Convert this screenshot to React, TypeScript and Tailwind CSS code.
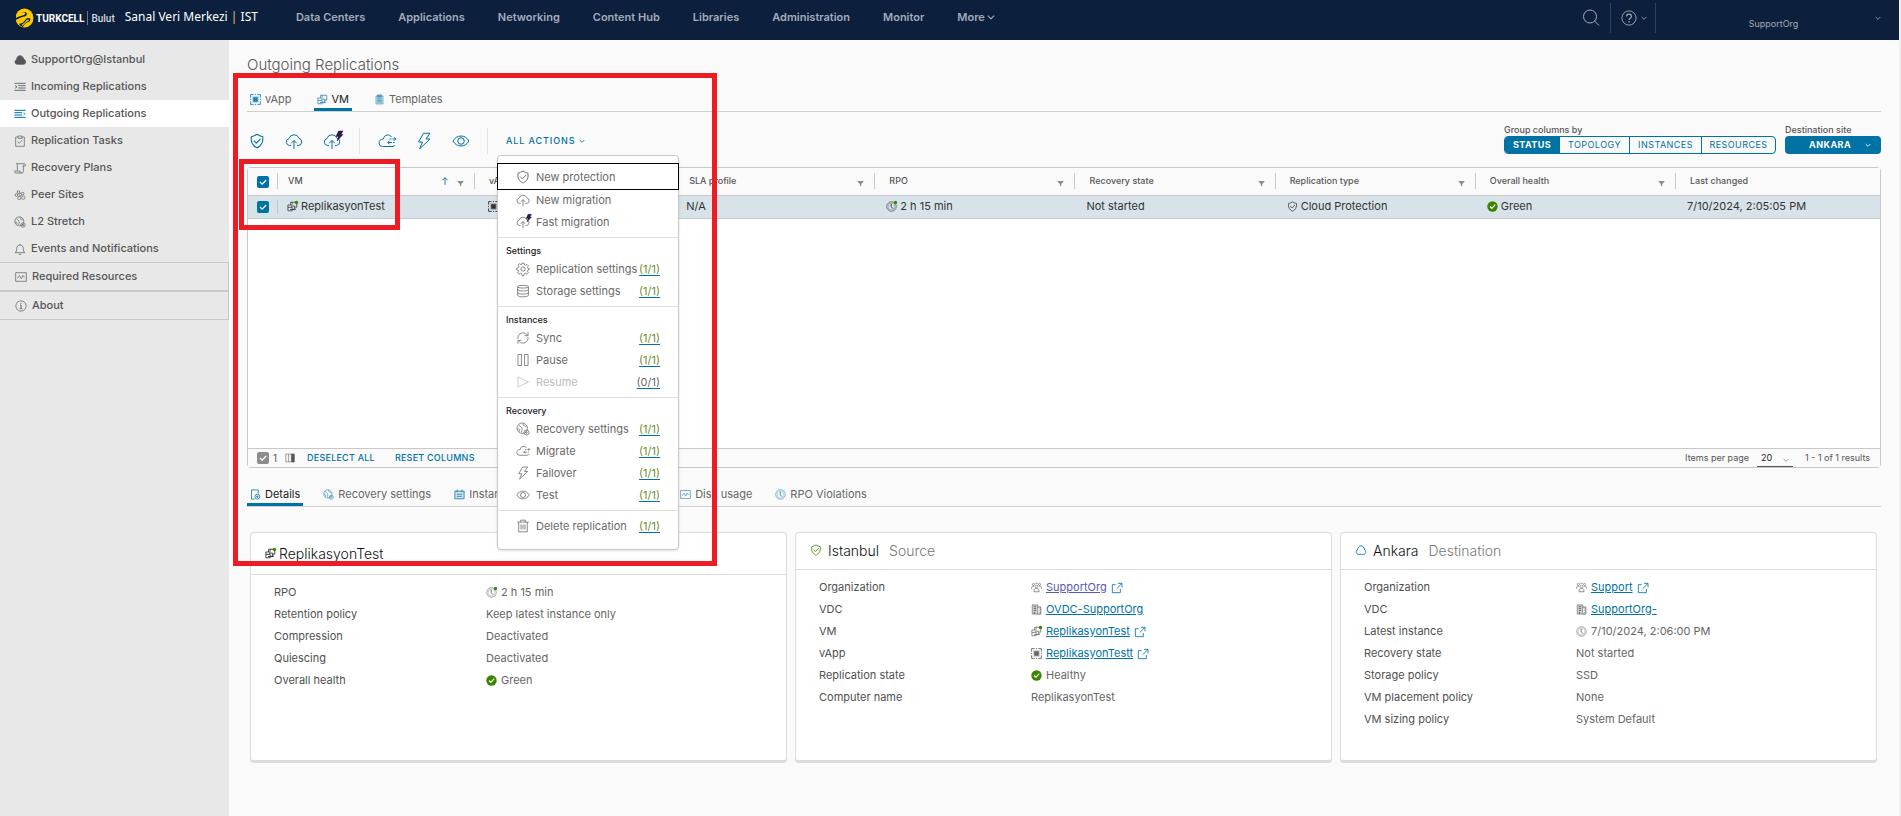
import React from "react";

type IconName =
  | "cloud" | "listIn" | "listOut" | "tasks" | "scroll" | "peers" | "globe" | "bell" | "chart" | "info"
  | "vapp" | "vm" | "clipboard" | "shield" | "cloudUp" | "cloudFast" | "migrate" | "bolt" | "eye"
  | "gear" | "storage" | "sync" | "pause" | "play" | "trash" | "details" | "calendar" | "clock"
  | "people" | "building" | "popout" | "ok" | "drop" | "search" | "help" | "chevron" | "filter" | "arrowUp" | "columns";

const CLOUD = "M12 27H9.5A7 7 0 0 1 8 13.2 10.5 10.5 0 0 1 28 12.5a7.4 7.4 0 0 1-1 14.5h-3";

const shapes: Record<IconName, React.ReactNode> = {
  cloud: <path fill="currentColor" d="M9 31a7 7 0 0 1-4-12c2-1 2-2 3-5C9 8 13 5 18 5s10 4 11 10c4 2 6 5 6 9a7 7 0 0 1-6 7Z" />,
  listIn: <path d="M1 7h34M13 14h22M13 21h22M1 28h34M3 13l6 4.5L3 22" strokeWidth="2.500" />,
  listOut: (
    <>
      <path d="M1 7h34M1 14h23M1 21h23M1 28h34" strokeWidth="3" />
      <path d="M29 13l4 4.500-4 4.500" />
    </>
  ),
  tasks: <path d="M12 6H5v28h26V6h-7M12 3h12v7H12ZM11 20l5 5 9-10" />,
  scroll: <path d="M10 25V5h21a3 3 0 0 1 3 3v4h-6M28 8v21a4 4 0 0 1-4 4H6a4 4 0 0 1-4-4v-2h16v2a3 3 0 0 0 5 3M6 5h4" />,
  peers: (
    <>
      <circle cx="13" cy="9" r="4" /><circle cx="7" cy="18" r="4" /><circle cx="19" cy="17" r="4" />
      <circle cx="16" cy="27" r="5" /><circle cx="28" cy="26" r="5" /><circle cx="26" cy="14" r="4" />
    </>
  ),
  globe: (
    <>
      <circle cx="16" cy="16" r="13.500" />
      <path d="M7 8c5 5 5 2 8 8s-3 8 0 11M18 4c-2 6 6 5 9 9M4 18c5-2 6 4 4 7" />
      <circle cx="27" cy="27" r="6.500" /><circle cx="27" cy="27" r="2" />
    </>
  ),
  bell: <path d="M3 29c4-2 5-6 5-12 0-7 4-11 10-11s10 4 10 11c0 6 1 10 5 12ZM15 32a3 3 0 0 0 6 0M18 3v3" />,
  chart: <path d="M2 5h32v26H2ZM7 22l6-8 6 9 5-10 5 6" />,
  info: <><circle cx="18" cy="18" r="15.500" /><path d="M15 15h3v11M14 26h8M18 8.500v3" strokeWidth="2.500" /></>,
  vapp: (
    <>
      <path d="M2 12V2h10M24 2h10v10M34 24v10H24M12 34H2V24M2 16v4M34 16v4M16 2h4M16 34h4" strokeWidth="3" />
      <rect x="8" y="8" width="20" height="20" fill="currentColor" opacity=".5" stroke="none" /><rect x="12" y="12" width="12" height="12" fill="currentColor" />
    </>
  ),
  vm: <path d="M12 13V4h20v16h-6M3 21v-8h16M3 21h14v11H3ZM13 17h12v10h-5M17 4v5M10 28h18v-3" strokeWidth="2.500" />,
  clipboard: (
    <>
      <path d="M6 6h24v27H6Z" fill="currentColor" fillOpacity=".35" strokeOpacity=".6" /><path d="M12 3h12v7H12Z" fill="currentColor" fillOpacity=".5" />
      <path d="M11 16h14M11 21h14M11 26h14" />
    </>
  ),
  shield: <path d="M18 2.700C14 5.300 9.500 7.200 5 8.400v7.500C5 28 18 33.400 18 33.400S31 28 31 15.900V8.400C26.500 7.200 22 5.300 18 2.700ZM10.800 17l5.600 5.800L26 13" strokeWidth="2.500" />,
  cloudUp: <path d={CLOUD + "M18 34V17M12.500 22.500 18 17l5.500 5.500"} />,
  cloudFast: (
    <>
      <path d={CLOUD + "M18 34V17M12.500 22.500 18 17l5.500 5.500"} />
      <path d="M31-2h9l-4 7h4L28 18l3-9h-5Z" fill="#2a1a45" stroke="#2a1a45" strokeWidth="1" />
    </>
  ),
  migrate: (
    <>
      <path d="M27 10C24 4 12 4 11 14c-6 0-9 4-9 8a7 7 0 0 0 7 7h19c3 0 5-1 6-3" />
      <path d="M23 14h4M29 14h6M32 10.500l3.500 3.500-3.500 3.500M33 21h-3M28 21h-8M23 17.500 19.500 21l3.500 3.500" />
    </>
  ),
  bolt: <path d="M17 2.500h13L22 14h8L9 34l6-14H7Z" />,
  eye: <><path d="M2 18C6 11 12 8 18 8s12 3 16 10c-4 7-10 10-16 10S6 25 2 18Z" /><circle cx="18" cy="18" r="6.500" /></>,
  gear: (
    <>
      <circle cx="18" cy="18" r="5.500" />
      <path d="M15.500 3h5l1 4.500 3 1.200 3.900-2.500 3.500 3.500-2.500 3.900 1.200 3 4.400 1v0.800l-4.400 3-1.200 2.500 2.500 4-3.500 3.400-3.900-2.400-3 1.100-1 5h-5l-1-5-3-1.100-3.900 2.400-3.500-3.400 2.500-4-1.200-3L2 20.500v-5l4.400-1 1.200-3-2.500-3.800 3.500-3.500 3.900 2.500 3-1.200Z" />
    </>
  ),
  storage: (
    <>
      <ellipse cx="18" cy="7" rx="14" ry="3.500" />
      <path d="M4 7v22c0 2 6 4 14 4s14-2 14-4V7M4 14c0 2 6 4 14 4s14-2 14-4M4 22c0 2 6 4 14 4s14-2 14-4" />
    </>
  ),
  sync: <path d="M5 20C4 9 14 2 24 6c2 1 4 2.500 5.500 5M31 3v9h-9M31 16c1 11-9 18-19 14-2-1-4-2.500-5.500-5M5 33v-9h9" />,
  pause: <path d="M5 4h9v28H5ZM22 4h9v28h-9Z" />,
  play: <path d="M5 5l27 13L5 31Z" />,
  trash: <path d="M3 8h30M12 8V3h12v5M7 8v25h22V8M13 14v13M18 14v13M23 14v13" />,
  details: <><path d="M15 33H5V3h22v12" strokeWidth="3" /><circle cx="24" cy="25" r="8" strokeWidth="3" /><path d="M24 21v8M20 25h8" strokeWidth="3" /></>,
  calendar: <><path d="M3 7h30v25H3Z" fill="currentColor" fillOpacity=".15" strokeWidth="3" /><path d="M10 2v9M26 2v9M9 17h18M9 24h18" strokeWidth="3" /></>,
  clock: <><circle cx="18" cy="18" r="15.500" /><circle cx="18" cy="18" r="11" strokeWidth="1" /><path d="M17 9v10l6 6" strokeWidth="3" /></>,
  people: (
    <>
      <circle cx="18" cy="15" r="4.500" /><circle cx="8" cy="8" r="3.500" /><circle cx="28" cy="8" r="3.500" />
      <path d="M10 32v-5c0-4 4-6 8-6s8 2 8 6v5ZM2 22v-4c0-3 4-5 8-4M34 22v-4c0-3-4-5-8-4M14 5c2-2 6-2 8 0" strokeWidth="2.500" />
    </>
  ),
  building: (
    <>
      <path d="M4 3h18v30H4Z" fill="currentColor" fillOpacity=".3" />
      <path d="M22 10h10v23H22M9 9h8M9 15h8M9 21h8M9 27h3v6M26 16h2M26 22h2M26 28h2" strokeWidth="3" />
    </>
  ),
  popout: <path d="M14 8H4v24h24V21M21 4h12v12M33 4 17 20" strokeWidth="2.500" />,
  ok: <><circle cx="18" cy="18" r="17" fill="#3c8500" stroke="none" /><path d="M10 18l6 6 11-12" stroke="#fff" strokeWidth="3.500" /></>,
  drop: <path d="M10 31a7 7 0 0 1-3-13C8 10 14 5 18 5s10 5 11 13a7 7 0 0 1-3 13Z" strokeWidth="2.500" />,
  search: <><circle cx="16" cy="15" r="13" /><path d="M25 24l9 9" /></>,
  help: <><circle cx="18" cy="18" r="16" /><path d="M12.500 14.500c0-7 11-7 11 0 0 4-5.500 4-5.500 8M18 25v3" strokeWidth="2.500" /></>,
  chevron: <path d="M4 12l14 14 14-14" strokeWidth="5" />,
  filter: <path d="M3 5h30v4L22 20v14l-7-4V20L3 9Z" fill="currentColor" stroke="none" />,
  arrowUp: <path d="M18 35V3M6 15 18 3l12 12" strokeWidth="4" />,
  columns: <><path d="M3 4h30v28H3ZM13 4v28M23 4v28" /><path d="M24 4h9v28h-9Z" fill="currentColor" /></>,
};

function Icon({ name, className = "size-3", dot = false }: { name: IconName; className?: string; dot?: boolean }) {
  return (
    <svg viewBox="0 0 36 36" className={"shrink-0 overflow-visible " + className} fill="none" stroke="currentColor" strokeWidth="2" strokeLinejoin="round" aria-hidden="true">
      {shapes[name]}
      {dot && <circle cx="31" cy="5" r="5.500" fill="#3c8500" stroke="none" />}
    </svg>
  );
}

const navLinks = ["Data Centers", "Applications", "Networking", "Content Hub", "Libraries", "Administration", "Monitor"];

function Header() {
  return (
    <header className="flex h-10 items-center bg-[#0c1f3d] text-[#a3abb9]">
      <a href="#home" className="mb-1 ml-[15px] flex items-center font-['Roboto',sans-serif] text-[10px] text-white">
        <svg viewBox="0 0 38 40" className="h-5 w-[19px]" aria-hidden="true">
          <ellipse cx="19" cy="20" rx="18" ry="19" fill="#ffc900" />
          <path d="M0 15C8 18 13 6 21 8c5 2 3 8-2 9-7 1-11 4-19 8Z" fill="#0c1f3d" />
          <path d="M2 14C9 15 13 7 19 9c4 2 0 5-4 6-5 1-8 2-13 5Z" fill="#ffc900" />
          <path d="M10 31c8 1 9-10 17-11 5 0 5 6 0 8-5 1-8 4-11 10-3-1-6-3-8-6Z" fill="#0c1f3d" />
          <path d="M13 33c6-1 8-9 13-10 3 0 2 3-1 4-5 2-7 5-9 9Z" fill="#ffc900" />
        </svg>
        <span className="ml-0.5 font-bold">TURKCELL</span>
        <span className="mx-[3px] h-3.5 w-px bg-[#6b7688]" />
        <span className="font-medium text-[#d3d7de]">Bulut</span>
      </a>
      <span className="mb-1.5 ml-2.5 font-['Noto_Sans',sans-serif] text-[12px] whitespace-nowrap text-white">
        Sanal Veri Merkezi <span className="text-[#d9c27a]">|</span> IST
      </span>
      <nav className="mb-1.5 ml-[38px] flex items-center gap-[33px] text-[11px] font-semibold whitespace-nowrap">
        {navLinks.map((l) => (
          <a key={l} href={"#" + l}>{l}</a>
        ))}
        <button type="button" className="flex items-center gap-0.5">More<Icon name="chevron" className="size-2" /></button>
      </nav>
      <div className="ml-auto flex h-full items-center">
        <button type="button" aria-label="Search" className="mr-2.5 mb-1"><Icon name="search" className="size-[18px]" /></button>
        <div className="mb-1 flex h-[30px] items-center border-x border-[#33435d] pr-2 pl-2.5">
          <button type="button" aria-label="Help" className="flex items-center gap-1">
            <Icon name="help" className="size-4" /><Icon name="chevron" className="size-1.5" />
          </button>
        </div>
        <button type="button" className="mb-1 flex w-[243px] items-center pr-[18px] text-[9px]">
          <span className="mt-3 flex-1 pl-4 text-center">SupportOrg</span><Icon name="chevron" className="size-1.5" />
        </button>
      </div>
    </header>
  );
}

const sideItems: [IconName, string][] = [
  ["cloud", "SupportOrg@Istanbul"],
  ["listIn", "Incoming Replications"],
  ["listOut", "Outgoing Replications"],
  ["tasks", "Replication Tasks"],
  ["scroll", "Recovery Plans"],
  ["peers", "Peer Sites"],
  ["globe", "L2 Stretch"],
  ["bell", "Events and Notifications"],
];

function Sidebar() {
  return (
    <nav className="w-[229px] shrink-0 bg-[#e8e8e8] pt-1.5 text-[11px] font-medium text-[#565656]">
      {sideItems.map(([icon, label], i) => (
        <a key={label} href={"#" + label} className={"flex h-[27px] items-center gap-[5px] pl-3.5 " + (i === 2 ? "bg-white" : "")}>
          <Icon name={icon} className={i === 2 ? "size-3 text-[#0072a3]" : "size-3"} />
          {label}
        </a>
      ))}
      <a href="#resources" className="flex h-[29px] items-center gap-[5px] border border-l-0 border-[#c8c8c8] pl-[15px]"><Icon name="chart" />Required Resources</a>
      <a href="#about" className="flex h-[29px] items-center gap-[5px] border border-l-0 border-[#c8c8c8] pl-[15px]"><Icon name="info" />About</a>
    </nav>
  );
}

type MenuEntry = { icon: IconName; label: string; count?: string; disabled?: boolean; focus?: boolean };
const menuGroups: { title?: string; items: MenuEntry[] }[] = [
  { items: [
    { icon: "shield", label: "New protection", focus: true },
    { icon: "cloudUp", label: "New migration" },
    { icon: "cloudFast", label: "Fast migration" },
  ] },
  { title: "Settings", items: [
    { icon: "gear", label: "Replication settings", count: "(1/1)" },
    { icon: "storage", label: "Storage settings", count: "(1/1)" },
  ] },
  { title: "Instances", items: [
    { icon: "sync", label: "Sync", count: "(1/1)" },
    { icon: "pause", label: "Pause", count: "(1/1)" },
    { icon: "play", label: "Resume", count: "(0/1)", disabled: true },
  ] },
  { title: "Recovery", items: [
    { icon: "globe", label: "Recovery settings", count: "(1/1)" },
    { icon: "migrate", label: "Migrate", count: "(1/1)" },
    { icon: "bolt", label: "Failover", count: "(1/1)" },
    { icon: "eye", label: "Test", count: "(1/1)" },
  ] },
  { items: [{ icon: "trash", label: "Delete replication", count: "(1/1)" }] },
];

function ActionsMenu() {
  return (
    <div role="menu" className="absolute top-[21px] -left-[9px] z-20 w-[182px] rounded-sm border border-[#c8c8c8] bg-white pt-2 pb-3 text-[11px] text-[#6a6a6a] shadow-sm">
      {menuGroups.map((g, gi) => (
        <div key={gi} role="group" className={gi > 0 ? "mt-1 border-t border-[#e0e0e0] pt-1" : ""}>
          {g.title && <div className="flex h-4 items-center pl-2 text-[9px] font-medium text-[#222]">{g.title}</div>}
          {g.items.map((it) => (
            <button
              key={it.label}
              type="button"
              role="menuitem"
              disabled={it.disabled}
              className={"flex w-full items-center pr-[18px] pl-[18px] " + (it.focus ? "h-[25px] outline outline-black " : "h-[22px] ") + (it.disabled ? "text-[#bcbcbc]" : "")}
            >
              <Icon name={it.icon} className="mr-1.5 size-3.5" />
              <span className="whitespace-nowrap">{it.label}</span>
              {it.count && (
                <span className={"ml-auto underline decoration-[#0072a3] underline-offset-2 " + (it.disabled ? "text-[#6a6a6a]" : "text-[#6f8f2a]")}>{it.count}</span>
              )}
            </button>
          ))}
        </div>
      ))}
    </div>
  );
}

function Toolbar() {
  const btn = "flex w-[37px] justify-center text-[#0072a3]";
  return (
    <div className="flex h-[55px] items-start justify-between">
      <div className="flex h-[58px] items-center">
        <button type="button" aria-label="New protection" className="mr-5 ml-0.5 text-[#0072a3]"><Icon name="shield" className="size-4" /></button>
        <div className="flex items-center border-r border-[#e3e3e3] py-1">
          <button type="button" aria-label="New migration" className="mr-5 text-[#0072a3]"><Icon name="cloudUp" className="size-[18px]" /></button>
          <button type="button" aria-label="Fast migration" className="mr-[18px] text-[#0072a3]"><Icon name="cloudFast" className="size-[18px]" /></button>
        </div>
        <div className="flex items-center border-r border-[#e3e3e3] py-1 pr-2 pl-2">
          <button type="button" aria-label="Migrate" className={btn}><Icon name="migrate" className="size-[18px]" /></button>
          <button type="button" aria-label="Failover" className={btn}><Icon name="bolt" className="size-[18px]" /></button>
          <button type="button" aria-label="Test" className={btn}><Icon name="eye" className="size-[18px]" /></button>
        </div>
        <div className="relative ml-[18px]">
          <button type="button" aria-haspopup="menu" aria-expanded="true" className="flex items-center gap-1 text-[9px] font-medium tracking-widest whitespace-nowrap text-[#0072a3]">
            ALL ACTIONS<Icon name="chevron" className="size-1.5" />
          </button>
          <ActionsMenu />
        </div>
      </div>
      <div className="mt-[11px] flex gap-[9px] text-[9px] font-medium text-[#565656]">
        <div>
          <div id="group-by" className="h-[13px] leading-[13px]">Group columns by</div>
          <div role="group" aria-labelledby="group-by" className="flex h-[18px] divide-x divide-[#0072a3] overflow-hidden rounded-sm border border-[#0072a3] tracking-wider text-[#0072a3]">
            <button type="button" className="w-[55px] bg-[#0072a3] font-bold text-white">STATUS</button>
            <button type="button" className="w-[70px] font-normal">TOPOLOGY</button>
            <button type="button" className="w-[72px] font-normal">INSTANCES</button>
            <button type="button" className="w-[73px] font-normal">RESOURCES</button>
          </div>
        </div>
        <div>
          <label htmlFor="site" className="block h-[13px] leading-[13px]">Destination site</label>
          <div className="relative text-white">
            <select id="site" className="block h-[18px] w-24 appearance-none rounded-sm bg-[#0072a3] pl-6 font-bold tracking-wider">
              <option>ANKARA</option>
            </select>
            <Icon name="chevron" className="absolute top-1.5 right-2.5 size-1.5" />
          </div>
        </div>
      </div>
    </div>
  );
}

function Check({ label, className = "bg-[#0072a3]" }: { label: string; className?: string }) {
  return (
    <span className="relative inline-block size-3 align-middle">
      <input type="checkbox" defaultChecked aria-label={label} className={"block size-3 appearance-none rounded-xs " + className} />
      <svg viewBox="0 0 12 12" className="pointer-events-none absolute inset-0 size-3" fill="none" stroke="#fff" strokeWidth="1.200" aria-hidden="true"><path d="M3 6l2.200 2.200L9.200 4" /></svg>
    </span>
  );
}

const columns = ["VM", "vApp", "SLA profile", "RPO", "Recovery state", "Replication type", "Overall health", "Last changed"];

function Grid() {
  return (
    <section className="flex min-h-[301px] flex-col rounded-sm border border-[#c8c8c8] bg-white">
      <table className="w-full table-fixed border-collapse text-left">
        <colgroup>
          <col className="w-[29px]" />
          <col className="w-[197px]" />
          <col /><col /><col /><col /><col /><col />
          <col className="w-[205px]" />
        </colgroup>
        <thead>
          <tr className="h-[27px] border-b border-[#c8c8c8] bg-[#fafafa] text-[9px] text-[#565656]">
            <th className="pl-[9px]"><Check label="Select all" /></th>
            {columns.map((c, i) => (
              <th key={c} className="p-0 font-medium">
                <div className={"flex h-4 items-center border-l border-[#c8c8c8] pr-2.5 " + (i === 0 ? "pl-2.5" : "pl-3.5")}>
                  <span className="mb-0.5 flex-1 whitespace-nowrap">{c}</span>
                  {i === 0 && <Icon name="arrowUp" className="mr-2 size-2 text-[#0072a3]" />}
                  {i < 7 && (
                    <button type="button" aria-label={"Filter " + c} className="mt-1 text-[#8c8c8c]"><Icon name="filter" className="size-[7px]" /></button>
                  )}
                </div>
              </th>
            ))}
          </tr>
        </thead>
        <tbody>
          <tr className="h-[23px] border-b border-[#c8c8c8] bg-[#d8e3e9] text-[11px] whitespace-nowrap text-[#333] [&_td]:p-0 [&_td]:pl-3 [&_td>div]:flex [&_td>div]:items-center [&_td>div]:gap-[3px]">
            <td><div className="-ml-[3px]"><Check label="Select ReplikasyonTest" /></div></td>
            <td><div className="-ml-3 h-3.5 border-l border-[#c0c8cc] pl-[9px]"><Icon name="vm" dot className="size-[11px]" />ReplikasyonTest</div></td>
            <td><Icon name="vapp" className="ml-0.5 size-[11px]" /></td>
            <td>N/A</td>
            <td><div><Icon name="clock" dot className="size-[11px]" />2 h 15 min</div></td>
            <td>Not started</td>
            <td><div><Icon name="shield" className="size-[11px]" />Cloud Protection</div></td>
            <td><div><Icon name="ok" className="size-[11px]" />Green</div></td>
            <td>7/10/2024, 2:05:05 PM</td>
          </tr>
        </tbody>
      </table>
      <div className="mt-auto flex h-[19px] items-center border-t border-[#c8c8c8] bg-[#fafafa] pr-2.5 pl-[9px] text-[9px] text-[#565656]">
        <Check label="Selected rows" className="bg-[#8c8c8c]" />
        <span className="ml-1 text-[10px]">1</span>
        <button type="button" aria-label="Manage columns" className="ml-2"><Icon name="columns" className="size-2.5" /></button>
        <button type="button" className="ml-3 font-medium tracking-wide text-[#0072a3]">DESELECT ALL</button>
        <button type="button" className="ml-5 font-medium tracking-wide text-[#0072a3]">RESET COLUMNS</button>
        <label htmlFor="per-page" className="ml-auto">Items per page</label>
        <div className="relative ml-2">
          <select id="per-page" className="block h-[18px] w-9 appearance-none border-b border-[#565656] bg-transparent pl-1 text-[9px] text-[#222]">
            <option>20</option>
          </select>
          <Icon name="chevron" className="absolute top-2 right-1 size-1.5 text-[#8c8c8c]" />
        </div>
        <span className="ml-3">1 - 1 of 1 results</span>
      </div>
    </section>
  );
}

function Tab({ icon, label, active = false, className = "" }: { icon: IconName; label: string; active?: boolean; className?: string }) {
  return (
    <button
      type="button"
      role="tab"
      aria-selected={active}
      className={"flex items-center gap-1 px-[3px] text-[11px] whitespace-nowrap " + (active ? "border-b-[3px] border-[#0072a3] pt-[3px] text-[#222] " : "text-[#666] ") + className}
    >
      <Icon name={icon} className="size-[11px] text-[#2583af]" />
      {label}
    </button>
  );
}

type Row = { label: string; value: string; icon?: IconName; dot?: boolean; link?: boolean; popout?: boolean; visited?: boolean };

function Card({ icon, dot, iconClass, title, sub, rows, tall }: { icon: IconName; dot?: boolean; iconClass: string; title: string; sub?: string; rows: Row[]; tall?: boolean }) {
  return (
    <article className="min-h-[231px] flex-1 rounded-sm border border-b-[3px] border-[#dcdcdc] bg-white text-[11px]">
      <h2 className={"flex items-center border-b border-[#dcdcdc] text-[14px] font-light text-[#111] " + (tall ? "h-[42px] gap-[3px] pl-3.5" : "h-[37px] gap-1.5 pb-0.5 pl-3.5")}>
        <Icon name={icon} dot={dot} className={iconClass} />
        {title}
        {sub && <span className="ml-1 text-[#777]">{sub}</span>}
      </h2>
      <dl className="pt-1.5">
        {rows.map((r) => (
          <div key={r.label} className="flex h-[22px] items-center pl-[23px] whitespace-nowrap text-[#666]">
            <dt className="w-[212px] text-[#505050]">{r.label}</dt>
            <dd className="flex items-center gap-1">
              {r.icon && <Icon name={r.icon} dot={r.dot} className="size-[11px]" />}
              {r.link ? (
                <a href={"#" + r.value} className={"underline " + (r.visited ? "text-[#5659b8]" : "text-[#0072a3]")}>{r.value}</a>
              ) : (
                <span>{r.value}</span>
              )}
              {r.popout && <Icon name="popout" className="mt-0.5 size-3 text-[#0072a3]" />}
            </dd>
          </div>
        ))}
      </dl>
    </article>
  );
}

export default function App() {
  return (
    <div className="flex min-h-screen flex-col border-r-2 border-[#f0f0f0] bg-[#fafafa] font-['Inter',sans-serif]">
      <Header />
      <div className="flex flex-1">
        <Sidebar />
        <main className="relative min-w-0 flex-1 px-[18px] pt-[15px]">
          <h1 className="text-[15px] leading-5 font-light text-[#565656]">Outgoing Replications</h1>
          <div role="tablist" className="mt-3 flex h-[25px] gap-[19px] border-b border-[#d0d0d0]">
            <Tab icon="vapp" label="vApp" />
            <Tab icon="vm" label="VM" active />
            <Tab icon="clipboard" label="Templates" />
          </div>
          <Toolbar />
          <Grid />
          <div role="tablist" className="mt-3.5 flex h-[25px] gap-[17px] border-b border-[#d0d0d0]">
            <Tab icon="details" label="Details" active />
            <Tab icon="globe" label="Recovery settings" />
            <Tab icon="calendar" label="Instances" className="w-[209px]" />
            <Tab icon="chart" label="Disk usage" />
            <Tab icon="clock" label="RPO Violations" />
          </div>
          <div className="mt-[25px] mr-1 ml-[3px] flex gap-2">
            <Card icon="vm" dot iconClass="size-[11px]" title="ReplikasyonTest" tall rows={[
              { label: "RPO", value: "2 h 15 min", icon: "clock", dot: true },
              { label: "Retention policy", value: "Keep latest instance only" },
              { label: "Compression", value: "Deactivated" },
              { label: "Quiescing", value: "Deactivated" },
              { label: "Overall health", value: "Green", icon: "ok" },
            ]} />
            <Card icon="shield" iconClass="size-3 text-[#3c8500]" title="Istanbul" sub="Source" rows={[
              { label: "Organization", value: "SupportOrg", icon: "people", link: true, popout: true, visited: true },
              { label: "VDC", value: "OVDC-SupportOrg", icon: "building", link: true },
              { label: "VM", value: "ReplikasyonTest", icon: "vm", dot: true, link: true, popout: true },
              { label: "vApp", value: "ReplikasyonTestt", icon: "vapp", link: true, popout: true },
              { label: "Replication state", value: "Healthy", icon: "ok" },
              { label: "Computer name", value: "ReplikasyonTest" },
            ]} />
            <Card icon="drop" iconClass="size-3 text-[#0072a3]" title="Ankara" sub="Destination" rows={[
              { label: "Organization", value: "Support", icon: "people", link: true, popout: true },
              { label: "VDC", value: "SupportOrg-", icon: "building", link: true },
              { label: "Latest instance", value: "7/10/2024, 2:06:00 PM", icon: "clock" },
              { label: "Recovery state", value: "Not started" },
              { label: "Storage policy", value: "SSD" },
              { label: "VM placement policy", value: "None" },
              { label: "VM sizing policy", value: "System Default" },
            ]} />
          </div>
          <div className="pointer-events-none absolute top-[33px] left-1 z-30 h-[493px] w-[484px] border-[5px] border-[#ed1c24]" />
          <div className="pointer-events-none absolute top-[119px] left-2.5 z-30 h-[71px] w-[161px] border-[5px] border-[#ed1c24]" />
        </main>
      </div>
    </div>
  );
}
